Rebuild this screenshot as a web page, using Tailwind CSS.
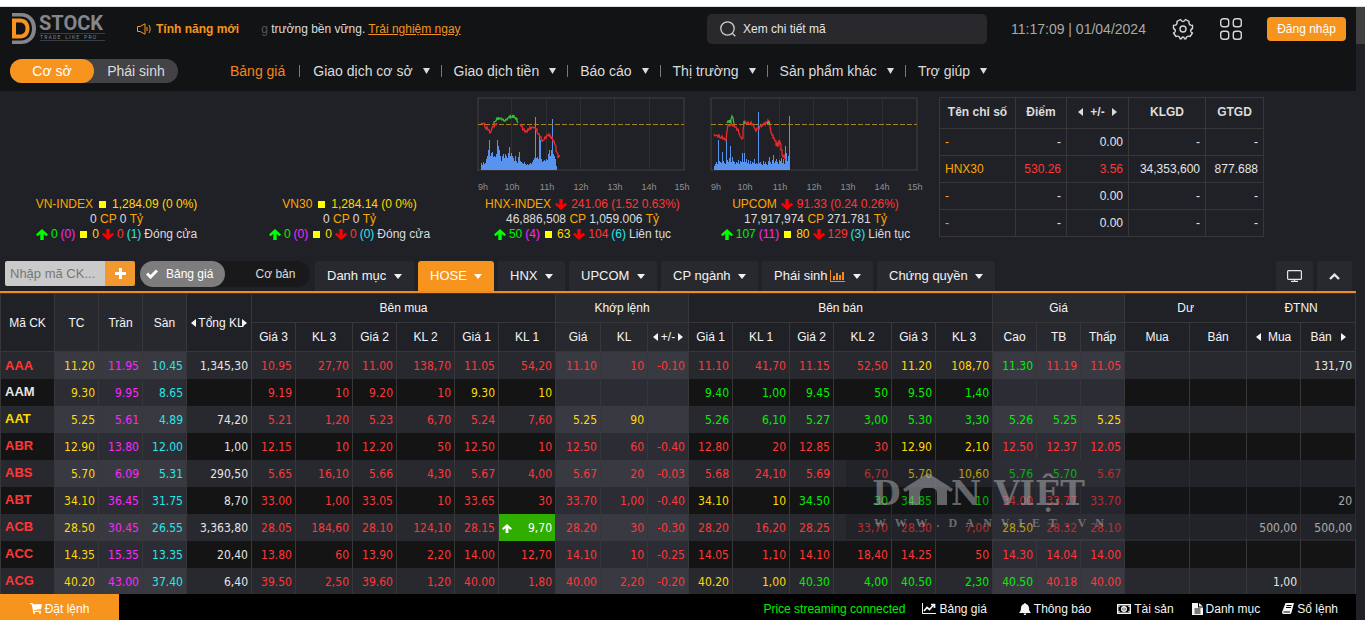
<!DOCTYPE html>
<html lang="vi" class="h-full">
<head>
  <meta charset="UTF-8">
  <meta name="viewport" content="width=device-width,initial-scale=1.0">
  <title>DSTOCK - Bảng giá</title>
  <script src="https://cdn.jsdelivr.net/npm/@tailwindcss/browser@4"></script>
</head>
<body class="h-screen flex flex-col overflow-hidden bg-[#202127] text-[#dcdcdc] font-['Liberation_Sans',Arial,sans-serif]">

  <!-- Shared icons -->
  <svg class="hidden" aria-hidden="true">
    <symbol id="caret" viewBox="0 0 8 5"><path d="M0 0h8L4 5z" fill="currentColor"/></symbol>
    <symbol id="navCaret" viewBox="0 0 7 6"><path d="M0 0h7L3.5 6z" fill="currentColor"/></symbol>
    <symbol id="left" viewBox="0 0 5 8"><path d="M5 0v8L0 4z" fill="currentColor"/></symbol>
    <symbol id="right" viewBox="0 0 5 8"><path d="M0 0v8l5-4z" fill="currentColor"/></symbol>
    <symbol id="up" viewBox="0 0 12 11"><path d="M6 0l6 5.600-1.600 1.600L7.700 5v6H4.300V5L1.600 7.200 0 5.600z" fill="currentColor"/></symbol>
    <symbol id="down" viewBox="0 0 12 11"><path d="M6 11l6-5.600-1.600-1.600L7.700 6V0H4.300v6L1.600 3.800 0 5.400z" fill="currentColor"/></symbol>
  </svg>

  <div class="h-[7px] shrink-0 bg-white border-b border-[#dfe3e3]"></div>

  <div class="flex flex-1 min-h-0">
    <div class="flex flex-col flex-1 min-w-0">

      <!-- Header -->
      <header class="shrink-0 h-[84px] bg-[#121315]">
        <div class="flex items-center h-11 pl-3 pr-[10px]">
          <a href="#" aria-label="DSTOCK" class="w-[94px] shrink-0">
            <svg class="overflow-visible" width="94" height="32" viewBox="0 0 94 32">
              <path d="M0 0h9c9 0 15 6 15 15.500S18 31 9 31H0v-3.500h9c7 0 11-5 11-12S16 3.500 9 3.500H0z" fill="#85868a"/>
              <path d="M0 5.500h8c6 0 9.500 4 9.500 10s-3.500 10-9.500 10H0zM4 9.500v12h4c3.500 0 5.500-2.500 5.500-6s-2-6-5.500-6z" fill="#f7941d" fill-rule="evenodd"/>
              <text x="27" y="17" font-family="Roboto, sans-serif" font-size="20" font-weight="700" fill="#85868a">STOCK</text>
              <path d="M28 20.500h65M28 27.500h65" stroke="#3c3d40"/>
              <text x="28" y="26" font-family="Roboto, sans-serif" font-size="5" fill="#85868a">T&#160;R&#160;A&#160;D&#160;E&#160;&#160;&#160;&#160;L&#160;I&#160;K&#160;E&#160;&#160;&#160;&#160;P&#160;R&#160;O</text>
            </svg>
          </a>
          <a href="#" class="flex items-center gap-[5px] ml-[31px] shrink-0 text-[12px] font-bold text-[#f7941d]">
            <svg width="14" height="12" viewBox="0 0 14 12" fill="none" stroke="#f7941d"><path d="M.5 3.500h2.500L8 .8v10.400L3 8.500H.5zM10 4v4M12 2c1.500 2.500 1.500 5.500 0 8"/></svg>
            Tính năng mới
          </a>
          <p class="ml-[22px] shrink-0 text-[12px]"><span class="text-[#55565a]">g</span> trưởng bền vững. <a href="#" class="text-[#f0931f] underline">Trải nghiệm ngay</a></p>
          <label class="flex items-center gap-[7px] ml-auto w-[280px] h-[30px] px-[13px] rounded-[5px] bg-[#28282d] text-[12px]">
            <svg class="shrink-0" width="16" height="16" viewBox="0 0 16 16" fill="none" stroke="#cfcfcf" stroke-width="1.300"><circle cx="7.500" cy="7.500" r="6.700"/><path d="M12.500 12.500l2.800 2.800"/></svg>
            <input type="text" aria-label="Xem chi tiết mã" placeholder="Xem chi tiết mã" class="w-full outline-none placeholder:text-[#e5e5e5]">
          </label>
          <time class="ml-6 w-[137px] text-[14px] text-[#a9a9a9] whitespace-nowrap">11:17:09 | 01/04/2024</time>
          <button class="ml-6" aria-label="Cài đặt">
            <svg width="22" height="22" viewBox="0 0 22 22" fill="none" stroke="#d5d5d5" stroke-width="1.400" stroke-linejoin="round">
              <circle cx="11" cy="11" r="3"/>
              <path d="M8.500 1.500c.8 1.600 1.600 2 2.500 2s1.700-.4 2.500-2l3.500 1.800c-.3 2 .3 3.200 1.300 3.700.6.400 1.400.4 2.200.3v3.200c-1.800.8-2 2.200-1.600 3.200.3.700.9 1.100 1.600 1.300l-2.500 3.500c-1.500-.6-2.600-.3-3.300.4-.5.500-.7 1.200-.7 1.900h-1.500c-.2-1.300-.8-1.800-1.500-1.800s-1.300.5-1.500 1.800H8c0-.7-.2-1.400-.7-1.900-.7-.7-1.800-1-3.300-.4L1.500 15c.7-.2 1.300-.6 1.600-1.300.4-1 .2-2.400-1.600-3.200V7.300c.8.1 1.600.1 2.200-.3C4.700 6.500 5.300 5.300 5 3.300z"/>
            </svg>
          </button>
          <button class="ml-[26px]" aria-label="Ứng dụng">
            <svg width="22" height="22" viewBox="0 0 22 22" fill="none" stroke="#d5d5d5" stroke-width="1.400"><rect x=".7" y=".7" width="8" height="8" rx="2.500"/><rect x="13.300" y=".7" width="8" height="8" rx="2.500"/><rect x=".7" y="13.300" width="8" height="8" rx="2.500"/><rect x="13.300" y="13.300" width="8" height="8" rx="2.500"/></svg>
          </button>
          <button class="ml-[25px] w-[79px] h-6 shrink-0 rounded-[4px] bg-[#f7941d] text-white text-[12px]">Đăng nhập</button>
        </div>

        <div class="flex items-center h-10 pl-[10px]">
          <div class="flex w-[168px] h-6 rounded-full bg-[#424247] text-[14px]">
            <button class="w-[84px] rounded-full bg-[#f7941d] text-white">Cơ sở</button>
            <button class="w-[84px]">Phái sinh</button>
          </div>
          <nav class="flex items-center ml-[52px] text-[14px] whitespace-nowrap">
            <a href="#" class="pr-[14px] text-[#f7841d]">Bảng giá</a>
            <span class="w-px h-3 bg-[#77787b]"></span>
            <a href="#" class="flex items-center gap-[10px] pl-[13px] pr-[11px]">Giao dịch cơ sở <svg width="7" height="6"><use href="#navCaret"/></svg></a>
            <span class="w-px h-3 bg-[#77787b]"></span>
            <a href="#" class="flex items-center gap-[10px] pl-3 pr-[11px]">Giao dịch tiền <svg width="7" height="6"><use href="#navCaret"/></svg></a>
            <span class="w-px h-3 bg-[#77787b]"></span>
            <a href="#" class="flex items-center gap-[10px] pl-3 pr-[11px]">Báo cáo <svg width="7" height="6"><use href="#navCaret"/></svg></a>
            <span class="w-px h-3 bg-[#77787b]"></span>
            <a href="#" class="flex items-center gap-[10px] pl-3 pr-[11px]">Thị trường <svg width="7" height="6"><use href="#navCaret"/></svg></a>
            <span class="w-px h-3 bg-[#77787b]"></span>
            <a href="#" class="flex items-center gap-[10px] pl-3 pr-[11px]">Sản phẩm khác <svg width="7" height="6"><use href="#navCaret"/></svg></a>
            <span class="w-px h-3 bg-[#77787b]"></span>
            <a href="#" class="flex items-center gap-[10px] pl-3">Trợ giúp <svg width="7" height="6"><use href="#navCaret"/></svg></a>
          </nav>
        </div>
      </header>

      <!-- Market indexes -->
      <section class="flex shrink-0 h-[170px] pt-[6px]">
        <div id="indexCards" class="flex text-[12px] leading-[15px]"></div>
        <table class="ml-[7px] h-[140px] w-[325px] table-fixed border-collapse text-[12px]">
          <colgroup><col class="w-[76px]"><col class="w-[51px]"><col class="w-[62px]"><col class="w-[77px]"><col class="w-[58px]"></colgroup>
          <thead class="[&_th]:border [&_th]:border-[#37373a] [&_th]:p-0 [&_th]:pb-[2px] [&_th]:font-bold">
            <tr class="h-[31px]">
              <th>Tên chỉ số</th>
              <th>Điểm</th>
              <th><span class="flex items-center justify-center gap-[7px]"><svg width="5" height="8"><use href="#left"/></svg>+/-<svg width="5" height="8"><use href="#right"/></svg></span></th>
              <th>KLGD</th>
              <th>GTGD</th>
            </tr>
          </thead>
          <tbody id="subIndexes"></tbody>
        </table>
      </section>

      <!-- Toolbar -->
      <div class="flex shrink-0 h-8 pl-[5px] pr-1 border-b-2 border-[#ef8a25]">
        <form class="flex h-[25px] shrink-0">
          <input type="text" aria-label="Nhập mã CK" placeholder="Nhập mã CK..." class="w-[100px] px-[5px] rounded-l-[2px] bg-[#cacaca] text-[13px] outline-none placeholder:text-[#777]">
          <button type="button" aria-label="Thêm" class="flex items-center justify-center w-[30px] rounded-r-[2px] bg-[#f3982f] text-white">
            <svg width="11" height="11" viewBox="0 0 11 11"><path d="M4 0h3v4h4v3H7v4H4V7H0V4h4z" fill="currentColor"/></svg>
          </button>
        </form>
        <div class="flex shrink-0 ml-[5px] w-[170px] h-[26px] rounded-full bg-[#19191b] text-[12px]">
          <button class="flex items-center gap-2 w-[85px] pl-[6px] rounded-full bg-[#7d7d7d] text-white">
            <svg width="12" height="10" viewBox="0 0 12 10" fill="none" stroke="currentColor" stroke-width="3"><path d="M1 4.500l3.500 3.500L11 1.500"/></svg>
            Bảng giá
          </button>
          <button class="flex-1 pl-4">Cơ bản</button>
        </div>
        <div class="flex gap-1 ml-[5px] text-[13px] text-[#f2f2f2] whitespace-nowrap">
          <button class="flex items-center justify-between w-[99px] px-3 rounded-t-[3px] bg-[#28292e]">Danh mục <svg width="8" height="5"><use href="#caret"/></svg></button>
          <button class="flex items-center justify-between w-[76px] px-3 rounded-t-[3px] bg-[#f7941d] text-white">HOSE <svg width="8" height="5"><use href="#caret"/></svg></button>
          <button class="flex items-center justify-between w-[67px] px-3 rounded-t-[3px] bg-[#28292e]">HNX <svg width="8" height="5"><use href="#caret"/></svg></button>
          <button class="flex items-center justify-between w-[88px] px-3 rounded-t-[3px] bg-[#28292e]">UPCOM <svg width="8" height="5"><use href="#caret"/></svg></button>
          <button class="flex items-center justify-between w-[97px] px-3 rounded-t-[3px] bg-[#28292e]">CP ngành <svg width="8" height="5"><use href="#caret"/></svg></button>
          <button class="flex items-center justify-between w-[111px] px-3 rounded-t-[3px] bg-[#28292e]"><span class="flex items-center gap-[3px]">Phái sinh <svg width="15" height="12" viewBox="0 0 15 12" fill="#f78a1d"><path d="M0 0h1v11h14v1H0zM3 6h2v4H3zM6 3h2v7H6zM9 5h2v5H9zM12 2h2v8h-2z"/></svg></span><svg width="8" height="5"><use href="#caret"/></svg></button>
          <button class="flex items-center justify-between w-[118px] px-3 rounded-t-[3px] bg-[#28292e]">Chứng quyền <svg width="8" height="5"><use href="#caret"/></svg></button>
        </div>
        <div class="flex gap-1 ml-auto">
          <button aria-label="Toàn màn hình" class="flex items-center justify-center w-[37px] rounded-t-[3px] bg-[#28292e]">
            <svg width="15" height="12" viewBox="0 0 15 12" fill="none" stroke="#e5e5e5" stroke-width="1.200"><rect x=".6" y=".6" width="13.800" height="8.800" rx="1"/><path d="M7.500 9.500v2M4 11.400h7"/></svg>
          </button>
          <button aria-label="Thu gọn" class="flex items-center justify-center w-[35px] rounded-t-[3px] bg-[#28292e]">
            <svg width="11" height="7" viewBox="0 0 11 7" fill="none" stroke="#e5e5e5" stroke-width="2.400"><path d="M1 6l4.500-4.300L10 6"/></svg>
          </button>
        </div>
      </div>

      <!-- Price board -->
      <main class="relative flex-1 min-h-0 overflow-hidden">
        <table class="w-full table-fixed border-collapse">
          <colgroup>
            <col class="w-[54px]"><col class="w-[44px]"><col class="w-[44px]"><col class="w-[44px]"><col class="w-[65px]">
            <col class="w-[44px]"><col class="w-[57px]"><col class="w-[44px]"><col class="w-[58px]"><col class="w-[44px]"><col class="w-[57px]">
            <col class="w-[45px]"><col class="w-[47px]"><col class="w-[41px]">
            <col class="w-[44px]"><col class="w-[57px]"><col class="w-[44px]"><col class="w-[58px]"><col class="w-[44px]"><col class="w-[57px]">
            <col class="w-[44px]"><col class="w-[44px]"><col class="w-[44px]">
            <col class="w-[65px]"><col class="w-[57px]"><col class="w-[54px]"><col class="w-[55px]">
          </colgroup>
          <thead class="text-[12px] text-[#f5f5f5] [&_th]:border [&_th]:border-[#37373a] [&_th]:p-0 [&_th]:font-normal [&_th]:whitespace-nowrap">
            <tr class="h-[29px]">
              <th rowspan="2">Mã CK</th>
              <th rowspan="2" class="bg-[#28292e]">TC</th>
              <th rowspan="2" class="bg-[#28292e]">Trần</th>
              <th rowspan="2" class="bg-[#28292e]">Sàn</th>
              <th rowspan="2"><span class="flex items-center justify-center gap-[2px]"><svg class="shrink-0" width="5" height="8"><use href="#left"/></svg>Tổng KL<svg class="shrink-0 -ml-1" width="5" height="8"><use href="#right"/></svg></span></th>
              <th colspan="6">Bên mua</th>
              <th colspan="3" class="bg-[#28292e]">Khớp lệnh</th>
              <th colspan="6">Bên bán</th>
              <th colspan="3" class="bg-[#28292e]">Giá</th>
              <th colspan="2">Dư</th>
              <th colspan="2">ĐTNN</th>
            </tr>
            <tr class="h-[29px]">
              <th>Giá 3</th><th>KL 3</th><th>Giá 2</th><th>KL 2</th><th>Giá 1</th><th>KL 1</th>
              <th class="bg-[#28292e]">Giá</th><th class="bg-[#28292e]">KL</th>
              <th class="bg-[#28292e]"><span class="flex items-center justify-center gap-[3px]"><svg width="5" height="8"><use href="#left"/></svg>+/-<svg width="5" height="8"><use href="#right"/></svg></span></th>
              <th>Giá 1</th><th>KL 1</th><th>Giá 2</th><th>KL 2</th><th>Giá 3</th><th>KL 3</th>
              <th class="bg-[#28292e]">Cao</th><th class="bg-[#28292e]">TB</th><th class="bg-[#28292e]">Thấp</th>
              <th>Mua</th><th>Bán</th>
              <th><span class="flex items-center justify-center gap-[7px]"><svg width="5" height="8"><use href="#left"/></svg>Mua</span></th>
              <th><span class="flex items-center justify-center gap-[9px]">Bán<svg width="5" height="8"><use href="#right"/></svg></span></th>
            </tr>
          </thead>
          <tbody id="priceRows" class="text-[12px] font-['DejaVu_Sans_Condensed','Noto_Sans',sans-serif]"></tbody>
        </table>

        <!-- Watermark -->
        <div class="absolute right-0 top-[167px] w-[510px] h-[79px] bg-[#15161a]/30 pointer-events-none">
          <svg width="260" height="79" viewBox="0 0 260 79" fill="#b4b4b8" fill-opacity=".5" font-family="'DejaVu Serif', serif" font-weight="700">
            <text x="26" y="45" font-size="33">D</text>
            <path d="M57 29l25-16 25 16-2 3-4-2v15H91V34c0-4-2-6-6-6h-5c-4 0-6 2-6 6v11H63V30l-4 2z"/>
            <text x="105" y="45" font-size="33">N</text>
            <text x="148" y="45" font-size="33">VIỆT</text>
            <text x="28" y="67" font-size="12" font-family="'Liberation Serif', serif">W&#160;&#160; W&#160;&#160; W&#160;&#160; .&#160;&#160; D&#160;&#160; A&#160;&#160; N&#160;&#160; V&#160;&#160; I&#160;&#160; E&#160;&#160; T&#160;&#160; .&#160;&#160; V&#160;&#160; N</text>
          </svg>
        </div>
      </main>

      <!-- Footer -->
      <footer class="flex shrink-0 h-[26px] pt-0 bg-black text-[12px] text-[#f5f5f5] whitespace-nowrap">
        <button class="flex items-center justify-center gap-[3px] w-[119px] pt-[3px] bg-[#f7941d] text-white">
          <svg width="12" height="11" viewBox="0 0 12 11" fill="currentColor"><path d="M0 0h2.600l.3 1.300H12L11 6.200 4 7v.8h7V9H2.900V7.500L1.700 1.200H0z"/><circle cx="4" cy="10" r="1"/><circle cx="10" cy="10" r="1"/></svg>
          Đặt lệnh
        </button>
        <div class="flex items-center ml-auto pt-[3px] pr-[18px]">
          <span class="text-[#00f000]">Price streaming connected</span>
          <a href="#" class="flex items-center gap-[3px] ml-[17px]"><svg width="14" height="11" viewBox="0 0 14 11" fill="none" stroke="currentColor"><path d="M.5 0v10.500H14"/><path d="M2 8l3-3.500 2.500 2L11.500 2M9 1.500h3.500V5" stroke-width="1.700"/></svg>Bảng giá</a>
          <a href="#" class="flex items-center gap-[3px] ml-8"><svg width="12" height="12" viewBox="0 0 12 12" fill="currentColor"><path d="M6 0c.6 0 .9.400.9.900C9 1.400 10 3 10 5c0 2.500.8 3.700 2 5H0c1.200-1.300 2-2.500 2-5 0-2 1-3.600 3.100-4.100C5.100.4 5.400 0 6 0zM4.700 10.500h2.600c0 2-2.600 2-2.600 0z"/></svg>Thông báo</a>
          <a href="#" class="flex items-center gap-[3px] ml-[26px]"><svg width="14" height="10" viewBox="0 0 14 10" fill="none" stroke="currentColor" stroke-width="1.400"><path d="M.7.700h12.600v8.600H.7z"/><circle cx="7" cy="5" r="2.300"/><path d="M7 3.500v3M2 2v1M12 2v1M2 7v1M12 7v1"/></svg>Tài sản</a>
          <a href="#" class="flex items-center gap-[3px] ml-[18px]"><svg width="11" height="12" viewBox="0 0 11 12"><path d="M0 0h6v4.500h5V12H0zM7 0l4 3.600H7z" fill="currentColor"/><path d="M2.500 6h6M2.500 8h6M2.500 10h6" stroke="#000"/></svg>Danh mục</a>
          <a href="#" class="flex items-center gap-[3px] ml-[22px]"><svg width="12" height="11" viewBox="0 0 12 11"><path d="M3.500 0H12L9.500 9.500c-.2.900-.8 1.500-1.700 1.500H1.500C.3 11-.2 10 .1 9z" fill="currentColor"/><path d="M4.500 2.500h5M4 4.500h5M1.500 9h6.500" stroke="#000"/></svg>Sổ lệnh</a>
        </div>
      </footer>
    </div>

    <!-- Scroll track -->
    <div class="w-[9px] shrink-0 bg-[#202127]"><div class="h-[37px] bg-[#3f3f3f]"></div></div>
  </div>

  <script>
    const COLORS = {
      r: 'text-[#ff3737]', g: 'text-[#00f000]', y: 'text-[#ffd900]', m: 'text-[#ff25ff]',
      c: 'text-[#25e8e8]', w: 'text-[#e5e5e5]', o: 'text-[#ffa500]'
    };

    // ---- Index cards ----
    const cards = [
      { name: 'VN-INDEX', move: 'y', value: '1,284.09 (0 0%)', vol: '0', val: '0', up: '0', ceil: '0', ref: '0', down: '0', floor: '1', state: 'Đóng cửa' },
      { name: 'VN30', move: 'y', value: '1,284.14 (0 0%)', vol: '0', val: '0', up: '0', ceil: '0', ref: '0', down: '0', floor: '0', state: 'Đóng cửa' },
      { name: 'HNX-INDEX', move: 'r', value: '241.06 (1.52 0.63%)', vol: '46,886,508', val: '1,059.006', up: '50', ceil: '4', ref: '63', down: '104', floor: '6', state: 'Liên tục',
        bars: [7,5,8,6,7,11,14,20,30,14,17,18,13,14,13,16,30,24,20,14,9,14,16,12,16,14,12,17,23,14,17,14,12,9,14,9,7,13,18,9,8,7,6,8,6,5,6,5,6,7,6,8,10,12,53,12,13,11,35,30,11,8,9,10,9,11,10,16,20,14,20,51,16,14,11,4],
        red: 'M4 26l1 1 2-1 1 4 1 2 1-2 1 3h1l1 3 1-1 1-4 1-2 1 1 1-3 1 1 1-2M43 27l1 2h1l1 4 1-1 1 3 1-1 1 1 1-3 1 1 1-3 1 2 1-2 2 1 1-1 1 3 1-1v3l1 2h1l1 3h1l1 4 2-1 1-3 1 1 1-3 2 1v-2l1 1 1 3 1-1 1 4h1l1 4 1 1v5l2 3v4l1-2h1',
        green: 'M17 27v-2l2-1 1-3h1v2l1-2 1 1 1-1 1 2 1-1 1 2h1l1-2 1 1 1-2 1-1 1 1v-3l1 2h1l1-2v3l1-2 1 2h1v2l1-2v3l1 2' },
      { name: 'UPCOM', move: 'r', value: '91.33 (0.24 0.26%)', vol: '17,917,974', val: '271.781', up: '107', ceil: '11', ref: '80', down: '129', floor: '3', state: 'Liên tục',
        bars: [4,6,8,6,30,9,8,7,18,9,7,6,31,10,8,12,24,8,13,9,8,6,8,7,10,6,9,8,17,8,17,8,11,7,10,6,9,6,8,7,11,6,7,6,58,7,8,6,5,9,6,8,6,5,9,13,8,6,10,15,7,9,11,8,6,10,9,12,7,11,6,24,17,9,14,54],
        red: 'M4 37l1 2 2-1 1 2 1-2 1 3h1l1-2 1 3 1-1 1 2h1l1-9 1-6 2 1 1-2 2 2 1-1 1 2h1l1 3 1-1 1 4 1 3 2 3 1-1v-7l1-8 1-2 2 3 1-2 1 2h1l1-2 1 3 1-1 1 3 2 4 1-3 2 1 1-3h1l1-2v2l2-3 1 2 1-3 2 1v-3l1 1 1 3v3l1 5 1 3h1v3h1l1 3h1v5l1-2 1 3v-4l1 1v-4l1 2 1 3v5h1v5l1 2 1-2 1 4 1 1',
        green: 'M17 26l1-2h1v2l1-3v2l1 1v-4l1-3 1 2 1 6M34 27v-2l1 1v1M57 27l1-2h1v2l1-1' }
    ];
    const icon = (id, cls) => `<svg width="12" height="11" class="${cls}"><use href="#${id}"/></svg>`;
    const square = '<i class="block size-[7px] mx-[2px] bg-[#ffff00]"></i>';

    function chart(c) {
      if (!c.bars) return '';
      const bars = c.bars.map((h, i) => `M${i + 4.5} 73v-${h}`).join('');
      const grid = [34.5, 69.5, 103.5, 137.5, 172.5].map(x => `M${x} 1v72`).join('');
      const hours = [6, 35, 70, 104, 138, 172, 205].map((x, i) => `<text x="${x}" y="93">${i + 9}h</text>`).join('');
      return `<svg class="overflow-visible" width="208" height="97" viewBox="0 0 208 97" fill="none">
        <path d="${grid}" stroke="#2f2f33"/>
        <rect x="1" y="1" width="206" height="72" stroke="#37373a" stroke-width="1.500"/>
        <path d="${bars}" stroke="#5a93ee"/>
        <path d="M1 27.500h206" stroke="#a5841c" stroke-dasharray="5 2"/>
        <path d="${c.red}" stroke="#f02a2a" stroke-width="1.300"/>
        <path d="${c.green}" stroke="#38c038" stroke-width="1.300"/>
        <g fill="#8f8f8f" font-size="9" text-anchor="middle">${hours}</g>
      </svg>`;
    }

    document.getElementById('indexCards').innerHTML = cards.map(c => `
      <article class="flex flex-col items-center w-[233px]">
        <div class="h-[100px] pr-1">${chart(c)}</div>
        <div class="flex items-center gap-1"><span class="${COLORS.o}">${c.name}</span>${c.move === 'y' ? square : icon('down', 'text-[#ff0000]')}<span class="${COLORS[c.move]}">${c.value}</span></div>
        <div>${c.vol} <span class="${COLORS.o}">CP</span> ${c.val} <span class="${COLORS.o}">Tỷ</span></div>
        <div class="flex items-center gap-[3px]">${icon('up', 'text-[#00ff00]')}<span class="${COLORS.g}">${c.up}</span><span class="${COLORS.m}">(${c.ceil})</span>${square}<span class="${COLORS.y}">${c.ref}</span>${icon('down', 'text-[#ff0000]')}<span class="${COLORS.r}">${c.down}</span><span class="${COLORS.c}">(${c.floor})</span><span>${c.state}</span></div>
      </article>`).join('');

    // ---- Small index table ----
    const subIndexes = [
      ['o-', 'w-', 'w0.00', 'w-', 'w-'],
      ['oHNX30', 'r530.26', 'r3.56', 'w34,353,600', 'w877.688'],
      ['o-', 'w-', 'w0.00', 'w-', 'w-'],
      ['o-', 'w-', 'w0.00', 'w-', 'w-']
    ];
    document.getElementById('subIndexes').innerHTML = subIndexes.map(r => '<tr class="h-[27px]">' + r.map((v, i) =>
      `<td class="border border-[#37373a] px-[5px] ${i ? 'text-right' : 'text-left'} ${COLORS[v[0]]}">${v.slice(1)}</td>`).join('') + '</tr>').join('');

    // ---- Price rows: first letter of each cell is its colour, _ is an empty cell ----
    const rows = [
      'rAAA y11.20 m11.95 c10.45 w1,345,30 r10.95 r27,70 r11.00 r138,70 r11.05 r54,20 r11.10 r10 r-0.10 r11.10 r41,70 r11.15 r52,50 y11.20 y108,70 g11.30 r11.19 r11.05 _ _ _ w131,70',
      'wAAM y9.30 m9.95 c8.65 _ r9.19 r10 r9.20 r10 y9.30 y10 _ _ _ g9.40 g1,00 g9.45 g50 g9.50 g1,40 _ _ _ _ _ _ _',
      'yAAT y5.25 m5.61 c4.89 w74,20 r5.21 r1,20 r5.23 r6,70 r5.24 r7,60 y5.25 y90 _ g5.26 g6,10 g5.27 g3,00 g5.30 g3,30 g5.26 g5.25 y5.25 _ _ _ _',
      'rABR y12.90 m13.80 c12.00 w1,00 r12.15 r10 r12.20 r50 r12.50 r10 r12.50 r60 r-0.40 r12.80 r20 r12.85 r30 y12.90 y2,10 r12.50 r12.37 r12.05 _ _ _ _',
      'rABS y5.70 m6.09 c5.31 w290,50 r5.65 r16,10 r5.66 r4,30 r5.67 r4,00 r5.67 r20 r-0.03 r5.68 r24,10 r5.69 r6,70 y5.70 y10,60 g5.76 g5.70 r5.67 _ _ _ _',
      'rABT y34.10 m36.45 c31.75 w8,70 r33.00 r1,00 r33.05 r10 r33.65 r30 r33.70 r1,00 r-0.40 y34.10 y10 g34.50 g30 g34.85 g10 r34.00 r33.77 r33.70 _ _ _ w20',
      'rACB y28.50 m30.45 c26.55 w3,363,80 r28.05 r184,60 r28.10 r124,10 r28.15 +9,70 r28.20 r30 r-0.30 r28.20 r16,20 r28.25 r33,70 r28.30 r7,00 y28.50 r28.32 r28.10 _ _ w500,00 w500,00',
      'rACC y14.35 m15.35 c13.35 w20,40 r13.80 r60 r13.90 r2,20 r14.00 r12,70 r14.10 r10 r-0.25 r14.05 r1,10 r14.10 r18,40 r14.25 r50 r14.30 r14.04 r14.00 _ _ _ _',
      'rACG y40.20 m43.00 c37.40 w6,40 r39.50 r2,50 r39.60 r1,20 r40.00 r1,80 r40.00 r2,20 r-0.20 y40.20 y1,00 g40.30 g4,00 g40.50 g2,30 g40.50 r40.18 r40.00 _ _ w1,00 _'
    ];
    const shaded = [1, 2, 3, 11, 12, 13, 20, 21, 22];

    document.getElementById('priceRows').innerHTML = rows.map((row, n) => {
      const even = n % 2;
      return `<tr class="h-[27px] ${even ? 'bg-[#141414]' : 'bg-[#28292e]'}">` + row.split(' ').map((v, i) => {
        if (i === 0) return `<td class="border-x border-[#37373a] p-0 pl-1 text-[13px] font-bold font-['Liberation_Sans',Arial,sans-serif] ${COLORS[v[0]]}">${v.slice(1)}</td>`;
        if (v[0] === '+') return `<td class="border-x border-[#37373a] p-0 px-[3px] pt-[2px] bg-[#2fae00] text-white"><span class="flex items-center justify-between"><svg width="10" height="9"><use href="#up"/></svg>${v.slice(1)}</span></td>`;
        const bg = shaded.includes(i) ? (even ? 'bg-[#2c2c35]' : 'bg-[#393941]') : '';
        return `<td class="border-x border-[#37373a] p-0 pr-[3px] pt-[2px] text-right ${bg} ${COLORS[v[0]] || ''}">${v === '_' ? '' : v.slice(1)}</td>`;
      }).join('') + '</tr>';
    }).join('');
  </script>
</body>
</html>
